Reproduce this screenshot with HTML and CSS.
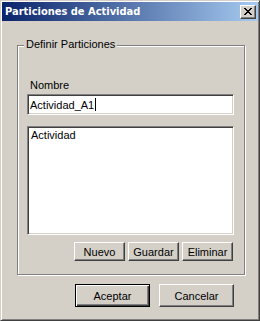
FILE: index.html
```html
<!DOCTYPE html>
<html lang="es">
<head>
    <meta charset="UTF-8">
    <meta name="viewport" content="width=device-width, initial-scale=1.0">
    <title>Particiones de Actividad</title>
    <link rel="stylesheet" href="styles.css">
</head>
<body>
    <div class="window">
        <div class="titlebar">
            <span class="title">Particiones de Actividad</span>
            <div class="close-button">
                <svg width="8" height="7" viewBox="0 0 8 7" shape-rendering="crispEdges">
                    <path d="M0 0h2v1h-2z M6 0h2v1h-2z M1 1h2v1h-2z M5 1h2v1h-2z M2 2h4v1h-4z M3 3h2v1h-2z M2 4h4v1h-4z M1 5h2v1h-2z M5 5h2v1h-2z M0 6h2v1h-2z M6 6h2v1h-2z" fill="#000"/>
                </svg>
            </div>
        </div>
        <div class="dialog-body">
            <div class="group">
                <span class="group-legend">Definir Particiones</span>
                <div class="field-label">Nombre</div>
                <div class="edit">Actividad_A1<span class="caret"></span></div>
                <div class="listbox">
                    <div class="list-item">Actividad</div>
                </div>
                <div class="group-buttons">
                    <div class="button small">Nuevo</div>
                    <div class="button small">Guardar</div>
                    <div class="button small">Eliminar</div>
                </div>
            </div>
            <div class="dialog-buttons">
                <div class="button wide default">Aceptar</div>
                <div class="button wide">Cancelar</div>
            </div>
        </div>
    </div>
</body>
</html>
```

FILE: styles.css
```css
body {
    margin: 0;
    font-family: "Liberation Sans", Arial, sans-serif;
    font-size: 11px;
    color: #000;
    background-color: #d4d0c8;
}

.window {
    width: 260px;
    height: 321px;
    box-sizing: border-box;
    padding: 1px;
    background-color: #d4d0c8;
    border: 1px solid;
    border-color: #d4d0c8 #404040 #404040 #d4d0c8;
    box-shadow: inset 1px 1px #fff, inset -1px -1px #808080;
}

.titlebar {
    display: flex;
    align-items: center;
    justify-content: space-between;
    height: 19px;
    padding-left: 3px;
    padding-right: 2px;
    background: linear-gradient(to right, #0a246a, #a6caf0);
}

.title {
    color: #fff;
    font-family: "DejaVu Sans Condensed", "DejaVu Sans", sans-serif;
    font-weight: bold;
    font-size: 11px;
}

.close-button {
    display: flex;
    align-items: center;
    justify-content: center;
    width: 16px;
    height: 14px;
    box-sizing: border-box;
    background-color: #d4d0c8;
    border: 1px solid;
    border-color: #fff #404040 #404040 #fff;
    box-shadow: inset -1px -1px #808080;
}

.dialog-body {
    padding: 24px 0 0 15px;
}

.group {
    position: relative;
    width: 228px;
    box-sizing: border-box;
    padding: 33px 10px 13px 9px;
    border: 1px solid #808080;
    box-shadow: inset 1px 1px #fff, 1px 1px #fff;
}

.group-legend {
    position: absolute;
    top: -8px;
    left: 6px;
    padding: 0 2px;
    line-height: 13px;
    background-color: #d4d0c8;
}

.field-label {
    padding-left: 3px;
    line-height: 13px;
}

.edit {
    display: flex;
    align-items: center;
    height: 21px;
    margin-top: 2px;
    box-sizing: border-box;
    padding-left: 2px;
    background-color: #fff;
    border: 1px solid;
    border-color: #808080 #fff #fff #808080;
    box-shadow: inset 1px 1px #404040, inset -1px -1px #d4d0c8;
}

.caret {
    width: 1px;
    height: 13px;
    margin-left: 1px;
    background-color: #000;
}

.listbox {
    height: 109px;
    margin-top: 11px;
    box-sizing: border-box;
    padding: 2px 2px;
    background-color: #fff;
    border: 1px solid;
    border-color: #808080 #fff #fff #808080;
    box-shadow: inset 1px 1px #404040, inset -1px -1px #d4d0c8;
}

.list-item {
    padding-left: 1px;
    line-height: 13px;
}

.group-buttons {
    display: flex;
    justify-content: flex-end;
    gap: 3px;
    margin-top: 7px;
    padding-right: 1px;
}

.dialog-buttons {
    display: flex;
    justify-content: flex-end;
    gap: 9px;
    width: 217px;
    margin-top: 9px;
}

.button {
    display: flex;
    align-items: center;
    justify-content: center;
    box-sizing: border-box;
    background-color: #d4d0c8;
    border: 1px solid;
    border-color: #fff #404040 #404040 #fff;
    box-shadow: inset -1px -1px #808080;
}

.button.small {
    width: 51px;
    height: 19px;
}

.button.wide {
    width: 75px;
    height: 23px;
}

.button.default {
    border-color: #000;
    box-shadow: inset 1px 1px #fff, inset -1px -1px #404040, inset -2px -2px #808080;
}
```
